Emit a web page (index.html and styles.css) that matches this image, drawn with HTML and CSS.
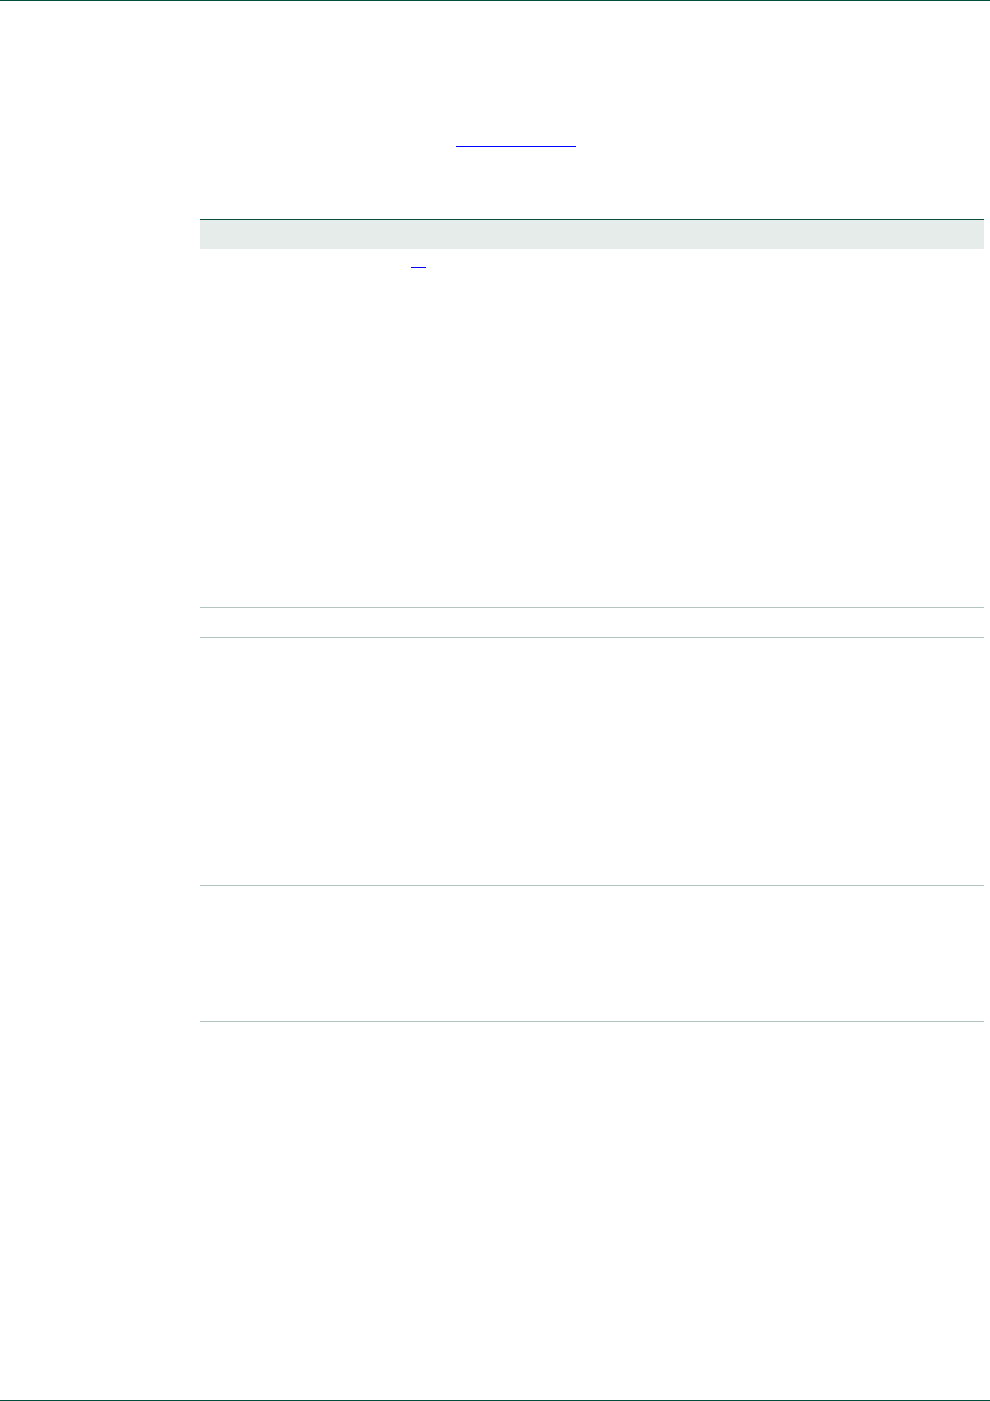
FILE: index.html
```html
<!DOCTYPE html>
<html lang="en">
<head>
<meta charset="utf-8">
<title>Document</title>
<link rel="stylesheet" href="styles.css">
</head>
<body>
<div class="page">
  <header class="topbar"></header>
  <main class="content">
    <div class="intro">
      <span class="link link-wide"></span>
    </div>
    <div class="table">
      <div class="thead"></div>
      <div class="row row-1">
        <span class="link link-small"></span>
      </div>
      <div class="row row-2"></div>
      <div class="row row-3"></div>
      <div class="row row-4"></div>
    </div>
  </main>
  <footer class="bottombar"></footer>
</div>
</body>
</html>
```

FILE: styles.css
```css
html, body {
  margin: 0;
  padding: 0;
  background: #ffffff;
  font-family: "Liberation Sans", Arial, sans-serif;
}

.page {
  min-height: 1401px;
  display: flex;
  flex-direction: column;
  box-sizing: border-box;
}

.topbar {
  border-top: 1px solid #004d3c;
}

.content {
  flex: 1;
  padding: 0 6px 0 200px;
}

.intro {
  padding-top: 130px;
  padding-left: 256px;
  margin-bottom: 72px;
}

.link {
  display: block;
  border-bottom: 1px solid #0000ff;
}

.link-wide {
  width: 120px;
  height: 15px;
}

.table {
  border-top: 1px solid #0b4f3e;
}

.thead {
  height: 29px;
  background: #e6ecea;
}

.row {
  border-bottom: 1px solid #b4c5c0;
}

.row-1 { height: 358px; }
.row-2 { height: 29px; }
.row-3 { height: 247px; }
.row-4 { height: 135px; }

.link-small {
  margin-left: 211px;
  width: 15px;
  height: 18px;
}

.bottombar {
  border-bottom: 1px solid #004d3c;
}
```
